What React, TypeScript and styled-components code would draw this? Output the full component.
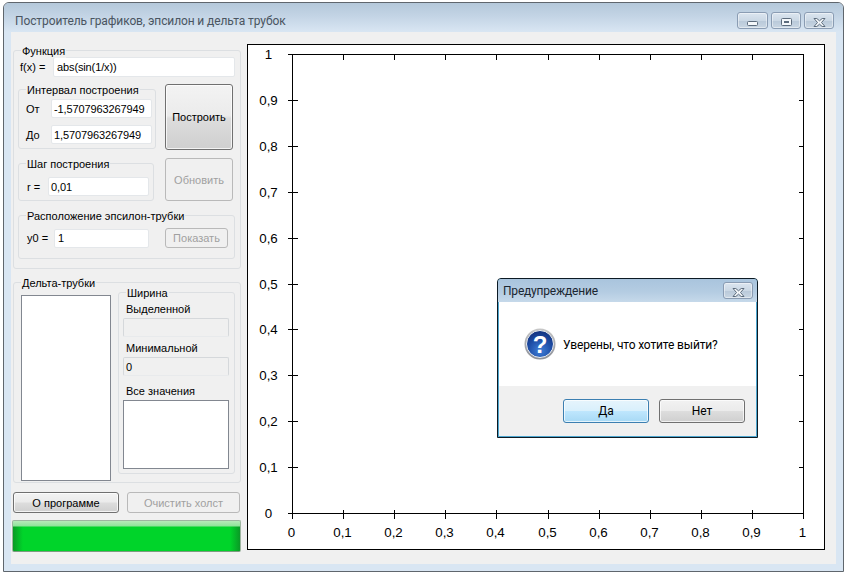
import React from "react";
import styled, { createGlobalStyle } from "styled-components";

const GlobalStyle = createGlobalStyle`
  html, body { margin: 0; padding: 0; background: #fff; }
  body { font-family: "Liberation Sans", Arial, sans-serif; font-size: 11px; color: #000; }
`;

const Page = styled.div`
  width: 846px;
  height: 575px;
  padding: 2px 2px 3px 3px;
  box-sizing: border-box;
  overflow: hidden;
`;

const Win = styled.div`
  position: relative;
  width: 841px;
  height: 570px;
  box-sizing: border-box;
  border: 1px solid #5f666d;
  border-radius: 6px 6px 0 0;
  background: #d9e6f3;
  display: flex;
  flex-direction: column;
`;

const TitleBar = styled.div`
  height: 29px;
  flex: none;
  display: flex;
  align-items: flex-start;
  justify-content: space-between;
  padding: 0 9px 0 11px;
  border-radius: 5px 5px 0 0;
  background: linear-gradient(180deg, #b4c8da 0%, #c3d4e5 45%, #d9e6f3 100%);
`;

const TitleText = styled.div`
  font-family: Roboto, "Open Sans", sans-serif;
  font-size: 12px;
  line-height: 16px;
  margin-top: 10px;
  color: #4a5561;
  letter-spacing: -0.11px;
`;

const Caption = styled.div`
  display: flex;
  gap: 3px;
  margin-top: 9px;
`;

const CaptionBtn = styled.div<{ $w: number }>`
  width: ${(p) => p.$w}px;
  height: 17px;
  box-sizing: border-box;
  padding-top: 3px;
  border: 1px solid #8a9cb3;
  border-radius: 3px;
  background: linear-gradient(180deg, #dbe5ef 0%, #cbd8e5 50%, #b9c9d9 52%, #c9d6e3 100%);
  box-shadow: inset 0 0 0 1px rgba(255, 255, 255, 0.45);
  display: flex;
  align-items: center;
  justify-content: center;
`;

const Client = styled.div`
  width: 825px;
  height: 532px;
  margin-left: 7px;
  background: #f0f0f0;
  display: flex;
  align-items: flex-start;
`;

const Sidebar = styled.div`
  width: 236px;
  padding: 18px 0 0 2px;
  flex: none;
  box-sizing: border-box;
  display: flex;
  flex-direction: column;
`;

const Group = styled.div<{ $w: number; $h: number; $mt?: number; $ml?: number }>`
  position: relative;
  width: ${(p) => p.$w}px;
  height: ${(p) => p.$h}px;
  margin-top: ${(p) => p.$mt ?? 0}px;
  margin-left: ${(p) => p.$ml ?? 0}px;
  box-sizing: border-box;
  flex: none;
  border: 1px solid #dcdfe2;
  border-radius: 3px;
`;

const Legend = styled.span<{ $left: number }>`
  position: absolute;
  top: -7px;
  left: ${(p) => p.$left}px;
  padding: 0 1px;
  background: #f0f0f0;
  line-height: 14px;
  white-space: nowrap;
`;

const Row = styled.div<{ $pl: number; $pt: number }>`
  display: flex;
  align-items: center;
  padding: ${(p) => p.$pt}px 0 0 ${(p) => p.$pl}px;
`;

const Label = styled.span<{ $w: number }>`
  width: ${(p) => p.$w}px;
  flex: none;
  white-space: nowrap;
`;

const Field = styled.div<{ $w: number; $h: number; $pad?: number }>`
  width: ${(p) => p.$w}px;
  height: ${(p) => p.$h}px;
  flex: none;
  box-sizing: border-box;
  padding: 0 ${(p) => p.$pad ?? 2}px;
  display: flex;
  align-items: center;
  background: #fff;
  border: 1px solid #e4e7ea;
  border-radius: 2px;
  white-space: nowrap;
  overflow: hidden;
  letter-spacing: -0.12px;
`;

const ReadOnlyField = styled(Field)<{ $mt: number }>`
  background: #f0f0f0;
  border: 1px solid #d5d8db;
  border-bottom-color: #e8eaec;
  margin: ${(p) => p.$mt}px 0 0 4px;
`;

const Columns = styled.div`
  display: flex;
  padding: 7px 0 0 4px;
`;

const LeftCol = styled.div`
  width: 147px;
  flex: none;
  display: flex;
  flex-direction: column;
`;

const RightCol = styled.div`
  display: flex;
  flex-direction: column;
`;

const Btn = styled.div<{ $w: number; $h: number; $mt?: number; $ml?: number; $off?: boolean }>`
  width: ${(p) => p.$w}px;
  height: ${(p) => p.$h}px;
  margin-top: ${(p) => p.$mt ?? 0}px;
  margin-left: ${(p) => p.$ml ?? 0}px;
  flex: none;
  box-sizing: border-box;
  border-radius: 3px;
  display: flex;
  align-items: center;
  justify-content: center;
  white-space: nowrap;
  border: 1px solid ${(p) => (p.$off ? "#b9b9b9" : "#707070")};
  color: ${(p) => (p.$off ? "#a0a0a0" : "#000")};
  background: ${(p) =>
    p.$off
      ? "#f0f0f0"
      : "linear-gradient(180deg, #f3f3f3 0%, #ebebeb 48%, #dddddd 52%, #cfcfcf 100%)"};
  box-shadow: ${(p) => (p.$off ? "none" : "inset 0 0 0 1px rgba(255,255,255,.75)")};
`;

const DeltaBody = styled.div`
  display: flex;
  padding: 12px 0 0 7px;
`;

const ListBox = styled.div<{ $w: number; $h: number }>`
  width: ${(p) => p.$w}px;
  height: ${(p) => p.$h}px;
  flex: none;
  box-sizing: border-box;
  background: #fff;
  border: 1px solid #828790;
`;

const WidthGroup = styled(Group)`
  display: flex;
  flex-direction: column;
`;

const SmallLabel = styled.div<{ $mt: number }>`
  margin: ${(p) => p.$mt}px 0 0 7px;
  line-height: 14px;
  white-space: nowrap;
`;

const NotesBox = styled(ListBox)`
  margin: 2px 0 0 4px;
`;

const ButtonRow = styled.div`
  display: flex;
  gap: 8px;
  margin-top: 9px;
`;

const Progress = styled.div`
  width: 229px;
  height: 32px;
  margin: 7px 0 0 -1px;
  box-sizing: border-box;
  border: 1px solid #9db5a0;
  border-bottom-color: #7d9a80;
  border-radius: 2px;
  background:
    linear-gradient(180deg, #b6eab9 0, #8fe39a 5px, rgba(0, 0, 0, 0) 6px),
    linear-gradient(90deg, #0a9a26 0, #00d42a 10px, #00d42a calc(100% - 10px), #0a9a26 100%);
`;

const ChartBox = styled.div`
  width: 578px;
  height: 506px;
  margin: 12px 0 0 0;
  flex: none;
  box-sizing: border-box;
  background: #fff;
  border: 1px solid #000;
`;

const Plot = styled.svg`
  display: block;
  width: 576px;
  height: 504px;
`;

const AxisText = styled.text`
  font-family: "Liberation Sans", Arial, sans-serif;
  font-size: 13.33px;
  fill: #000;
  text-anchor: middle;
`;

const Dialog = styled.div`
  position: absolute;
  left: 493px;
  top: 275px;
  width: 261px;
  height: 160px;
  box-sizing: border-box;
  border: 1px solid #0c1a24;
  border-radius: 4px 4px 0 0;
  background: #4da6cf;
  padding: 0 1px 1px 1px;
  display: flex;
  flex-direction: column;
`;

const DialogTitle = styled.div`
  height: 23px;
  flex: none;
  display: flex;
  justify-content: space-between;
  padding: 3px 4px 0 5px;
  box-sizing: border-box;
  background: linear-gradient(180deg, #a9c4dd 0%, #b4cce2 55%, #c6d9ea 100%);
  margin: 0 -1px;
  border-radius: 3px 3px 0 0;
`;

const DialogTitleText = styled.span`
  font-family: Roboto, "Open Sans", sans-serif;
  font-size: 12px;
  line-height: 16px;
  margin-top: 1px;
  color: #1b2630;
  letter-spacing: -0.2px;
`;

const DialogBody = styled.div`
  height: 84px;
  flex: none;
  background: #fff;
  display: flex;
  align-items: center;
  padding: 0 0 0 25px;
  gap: 7px;
  box-sizing: border-box;
`;

const DialogText = styled.span`
  font-family: Roboto, "Open Sans", sans-serif;
  font-size: 12px;
  line-height: 16px;
  padding-top: 1px;
  color: #000;
  letter-spacing: -0.15px;
`;

const DialogFooter = styled.div`
  flex: 1;
  background: #f0f0f0;
  display: flex;
  justify-content: flex-end;
  gap: 10px;
  padding: 13px 11px 0 0;
  box-sizing: border-box;
`;

const DialogBtn = styled.div<{ $primary?: boolean }>`
  width: 86px;
  height: 24px;
  box-sizing: border-box;
  border-radius: 3px;
  border: 1px solid ${(p) => (p.$primary ? "#3c7fb1" : "#707070")};
  font-family: Roboto, "Open Sans", sans-serif;
  font-size: 12px;
  display: flex;
  align-items: center;
  justify-content: center;
  background: ${(p) =>
    p.$primary
      ? "linear-gradient(180deg, #e6f4fc 0%, #d9f0fc 48%, #bee6fd 52%, #a7d9f5 100%)"
      : "linear-gradient(180deg, #f2f2f2 0%, #ebebeb 48%, #dddddd 52%, #cfcfcf 100%)"};
  box-shadow: inset 0 0 0 1px rgba(255, 255, 255, 0.7);
`;

const QuestionGlyph = styled.text`
  font-family: "Liberation Sans", Arial, sans-serif;
  font-weight: 700;
  font-size: 24px;
  fill: #fff;
  text-anchor: middle;
`;

const MinGlyph = styled.svg`
  margin-top: 3px;
`;

const MinIcon = () => (
  <MinGlyph width="11" height="5" viewBox="0 0 11 5">
    <rect x="0.5" y="0.5" width="10" height="4" rx="1" fill="#f4f7fa" stroke="#5c6b7c" />
  </MinGlyph>
);
const MaxIcon = () => (
  <svg width="11" height="8" viewBox="0 0 11 8">
    <rect x="0.5" y="0.5" width="10" height="7" rx="1" fill="#f4f7fa" stroke="#5c6b7c" />
    <rect x="3.5" y="3.5" width="4" height="1" fill="#8ea0b3" stroke="#5c6b7c" />
  </svg>
);
const CloseIcon = () => (
  <svg width="13" height="9" viewBox="0 0 13 9">
    <path
      d="M1 .5 H3.8 L6.5 2.8 L9.2 .5 H12 L8.5 4.5 L12 8.5 H9.2 L6.5 6.2 L3.8 8.5 H1 L4.5 4.5 Z"
      fill="#f4f7fa"
      stroke="#5c6b7c"
      strokeWidth="1"
    />
  </svg>
);

const QuestionIcon = () => (
  <svg width="32" height="32" viewBox="0 0 32 32">
    <defs>
      <radialGradient id="qball" cx="50%" cy="75%" r="75%">
        <stop offset="0%" stopColor="#3f7fd8" />
        <stop offset="55%" stopColor="#1f4fa8" />
        <stop offset="100%" stopColor="#12307c" />
      </radialGradient>
      <linearGradient id="qring" x1="0" y1="0" x2="0" y2="1">
        <stop offset="0%" stopColor="#c8c8c8" />
        <stop offset="100%" stopColor="#8d9097" />
      </linearGradient>
    </defs>
    <circle cx="16" cy="16" r="15.5" fill="url(#qring)" />
    <circle cx="16" cy="16" r="13.5" fill="url(#qball)" stroke="#eef0f2" strokeWidth="1" />
    <QuestionGlyph x="16" y="24.5">?</QuestionGlyph>
  </svg>
);

const ticks = [0, 1, 2, 3, 4, 5, 6, 7, 8, 9, 10];
const fmt = (i: number) => (i === 0 ? "0" : i === 10 ? "1" : `0,${i}`);

const Chart = () => {
  const x0 = 44.5;
  const x1 = 555.5;
  const yTop = 9.5;
  const yBot = 468.5;
  const xAt = (i: number) => Math.round(x0 + ((x1 - x0) * i) / 10 - 0.5) + 0.5;
  const yAt = (i: number) => Math.round(yBot - ((yBot - yTop) * i) / 10 - 0.5) + 0.5;
  return (
    <Plot viewBox="0 0 576 504">
      <g stroke="#000" strokeWidth="1" fill="none" shapeRendering="crispEdges">
        <path d={`M${x0 - 5} ${yTop} H${x1} V${yBot + 5} M${x0} ${yTop} V${yBot + 5} M${x0 - 5} ${yBot} H${x1}`} />
        {ticks.slice(1, 10).map((i) => (
          <path
            key={`x${i}`}
            d={`M${xAt(i)} ${yBot - 4} V${yBot + 5} M${xAt(i)} ${yTop} V${yTop + 5}`}
          />
        ))}
        {ticks.slice(1, 10).map((i) => (
          <path
            key={`y${i}`}
            d={`M${x0 - 5} ${yAt(i)} H${x0 + 5} M${x1 - 5} ${yAt(i)} H${x1}`}
          />
        ))}
      </g>
      {ticks.map((i) => (
        <AxisText key={`tx${i}`} x={xAt(i) - 1} y={492}>
          {fmt(i)}
        </AxisText>
      ))}
      {ticks.map((i) => (
        <AxisText key={`ty${i}`} x={20.5} y={yAt(i) + 4.5}>
          {fmt(i)}
        </AxisText>
      ))}
    </Plot>
  );
};

export default function App() {
  return (
    <>
      <GlobalStyle />
      <Page>
        <Win>
          <TitleBar>
            <TitleText>Построитель графиков, эпсилон и дельта трубок</TitleText>
            <Caption>
              <CaptionBtn $w={31}><MinIcon /></CaptionBtn>
              <CaptionBtn $w={30}><MaxIcon /></CaptionBtn>
              <CaptionBtn $w={30}><CloseIcon /></CaptionBtn>
            </Caption>
          </TitleBar>
          <Client>
            <Sidebar>
              <Group $w={228} $h={219}>
                <Legend $left={7}>Функция</Legend>
                <Row $pl={6} $pt={6}>
                  <Label $w={33}>f(x) =</Label>
                  <Field $w={182} $h={20} $pad={3}>abs(sin(1/x))</Field>
                </Row>
                <Columns>
                  <LeftCol>
                    <Group $w={138} $h={60} $mt={5}>
                      <Legend $left={7}>Интервал построения</Legend>
                      <Row $pl={7} $pt={9}>
                        <Label $w={25}>От</Label>
                        <Field $w={101} $h={19}>-1,5707963267949</Field>
                      </Row>
                      <Row $pl={7} $pt={7}>
                        <Label $w={25}>До</Label>
                        <Field $w={101} $h={19}>1,5707963267949</Field>
                      </Row>
                    </Group>
                    <Group $w={136} $h={38} $mt={14}>
                      <Legend $left={7}>Шаг построения</Legend>
                      <Row $pl={8} $pt={13}>
                        <Label $w={21}>r =</Label>
                        <Field $w={101} $h={19}>0,01</Field>
                      </Row>
                    </Group>
                  </LeftCol>
                  <RightCol>
                    <Btn $w={68} $h={66}>Построить</Btn>
                    <Btn $w={68} $h={43} $mt={8} $off>Обновить</Btn>
                  </RightCol>
                </Columns>
                <Group $w={217} $h={44} $mt={14} $ml={4}>
                  <Legend $left={7}>Расположение эпсилон-трубки</Legend>
                  <Row $pl={8} $pt={12}>
                    <Label $w={27}>y0 =</Label>
                    <Field $w={95} $h={19} $pad={3}>1</Field>
                    <Btn $w={63} $h={20} $ml={16} $off>Показать</Btn>
                  </Row>
                </Group>
              </Group>
              <Group $w={228} $h={201} $mt={13}>
                <Legend $left={7}>Дельта-трубки</Legend>
                <DeltaBody>
                  <ListBox $w={90} $h={186} />
                  <WidthGroup $w={117} $h={182} $mt={-3} $ml={7}>
                    <Legend $left={7}>Ширина</Legend>
                    <SmallLabel $mt={9}>Выделенной</SmallLabel>
                    <ReadOnlyField $w={106} $h={19} $mt={2} />
                    <SmallLabel $mt={4}>Минимальной</SmallLabel>
                    <ReadOnlyField $w={106} $h={19} $mt={2}>0</ReadOnlyField>
                    <SmallLabel $mt={8}>Все значения</SmallLabel>
                    <NotesBox $w={106} $h={69} />
                  </WidthGroup>
                </DeltaBody>
              </Group>
              <ButtonRow>
                <Btn $w={106} $h={21}>О программе</Btn>
                <Btn $w={113} $h={21} $off>Очистить холст</Btn>
              </ButtonRow>
              <Progress />
            </Sidebar>
            <ChartBox>
              <Chart />
            </ChartBox>
          </Client>
          <Dialog>
            <DialogTitle>
              <DialogTitleText>Предупреждение</DialogTitleText>
              <CaptionBtn $w={30}><CloseIcon /></CaptionBtn>
            </DialogTitle>
            <DialogBody>
              <QuestionIcon />
              <DialogText>Уверены, что хотите выйти?</DialogText>
            </DialogBody>
            <DialogFooter>
              <DialogBtn $primary>Да</DialogBtn>
              <DialogBtn>Нет</DialogBtn>
            </DialogFooter>
          </Dialog>
        </Win>
      </Page>
    </>
  );
}
